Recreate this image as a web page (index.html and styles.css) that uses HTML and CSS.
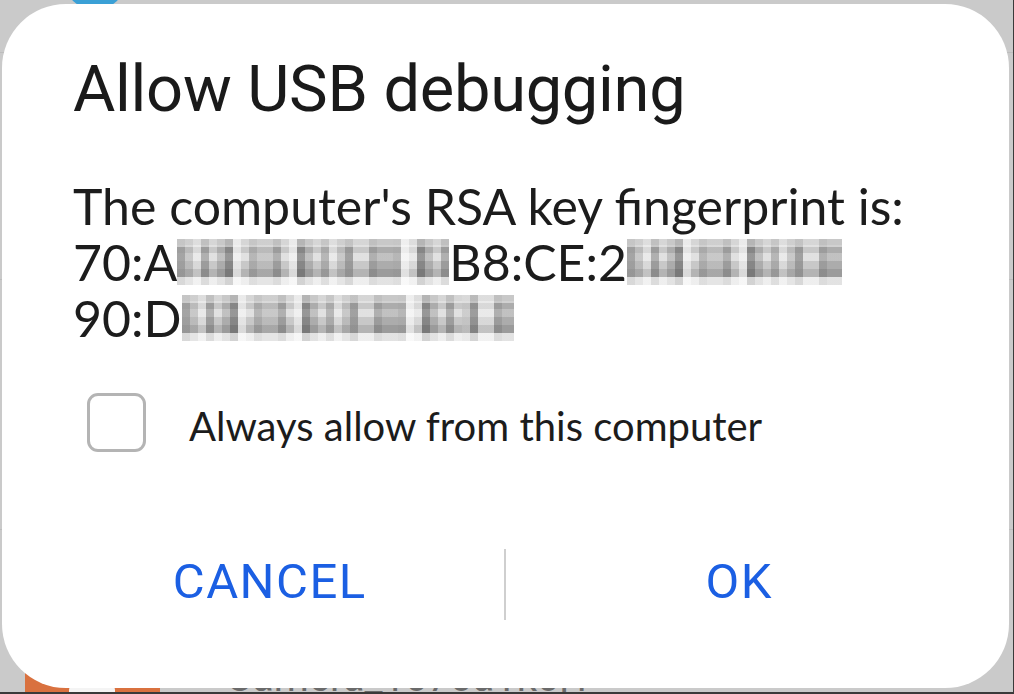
FILE: index.html
```html
<!DOCTYPE html>
<html>
<head>
<meta charset="utf-8">
<link rel="stylesheet" href="styles.css">
</head>
<body>
<div class="screen">
  <div class="bg-list">
    <div class="bg-row r1"><span class="blue-dot"></span></div>
    <div class="bg-row r2"></div>
    <div class="bg-row r3"></div>
    <div class="bg-row r4">
      <span class="app-icon"><span class="app-glyph"></span></span>
      <span class="file-name">Camera_1070a1k0j1</span>
    </div>
  </div>

  <div class="dialog">
    <h1 class="title">Allow USB debugging</h1>
    <div class="message">
      <div class="line">The computer's RSA key fingerprint is:</div>
      <div class="line">70:A<span class="mosaic m1"></span>B8:CE:2<span class="mosaic m2"></span></div>
      <div class="line">90:D<span class="mosaic m3"></span></div>
    </div>
    <label class="check-row">
      <span class="checkbox"></span>
      <span class="check-label">Always allow from this computer</span>
    </label>
    <div class="actions">
      <button class="btn">CANCEL</button>
      <span class="divider"></span>
      <button class="btn">OK</button>
    </div>
  </div>
</div>
</body>
</html>
```
FILE: styles.css
```css
* { box-sizing: border-box; }
html, body { margin: 0; padding: 0; }
body {
  width: 1014px;
  height: 694px;
  overflow: hidden;
  background: #cacaca;
  font-family: "Lato", "Noto Sans", sans-serif;
}
.screen {
  position: relative;
  width: 1014px;
  height: 694px;
  border-right: 1px solid #3a3a3a;
  border-bottom: 2px solid #3a3a3a;
  overflow: hidden;
}
.bg-list { display: flex; flex-direction: column; }
.bg-row { border-bottom: 1px solid #bdbdbd; position: relative; }
.r1 { height: 53px; }
.r2 { height: 227px; }
.r3 { height: 250px; }
.r4 { height: 170px; border-bottom: none; }
.blue-dot {
  position: absolute;
  left: 64px;
  top: -52px;
  width: 62px;
  height: 62px;
  border-radius: 50%;
  background: #3aa0d6;
}
.app-icon {
  position: absolute;
  left: 25px;
  top: 96px;
  width: 135px;
  height: 135px;
  border-radius: 34px;
  background: #d9713f;
}
.app-glyph {
  position: absolute;
  left: 44px;
  top: 58px;
  width: 46px;
  height: 30px;
  border-radius: 6px;
  background: #f4f4f4;
}
.file-name {
  position: absolute;
  left: 226px;
  top: 128px;
  font-family: "Roboto", sans-serif;
  font-size: 40px;
  line-height: 40px;
  color: #6a6a6a;
  white-space: nowrap;
}

.dialog {
  position: absolute;
  left: 2px;
  top: 4px;
  width: 1007px;
  height: 684px;
  background: #fff;
  border-radius: 64px;
  padding: 53px 0 0 71px;
  display: flex;
  flex-direction: column;
}
.title {
  margin: 0;
  font-family: "Roboto", sans-serif;
  font-weight: 400;
  font-size: 65px;
  line-height: 65px;
  color: #1a1a1a;
  letter-spacing: -0.3px;
}
.message {
  margin-top: 56px;
  font-size: 50px;
  line-height: 56px;
  color: #1c1c1c;
}
.line { white-space: nowrap; display: flex; align-items: center; height: 56px; }
.mosaic {
  display: inline-block;
  height: 46px;
  background:
    linear-gradient(0deg, rgba(255,255,255,0.6) 0 8px, transparent 8px 38px, rgba(255,255,255,0.45) 38px),
    repeating-linear-gradient(90deg, rgba(0,0,0,0.22) 0 8px, transparent 8px 24px),
    repeating-linear-gradient(90deg, rgba(0,0,0,0.14) 0 16px, transparent 16px 40px),
    repeating-linear-gradient(0deg, rgba(255,255,255,0.45) 0 8px, transparent 8px 24px),
    repeating-linear-gradient(90deg, rgba(255,255,255,0.5) 0 8px, transparent 8px 56px),
    repeating-linear-gradient(0deg, rgba(0,0,0,0.1) 0 16px, transparent 16px 40px),
    repeating-linear-gradient(90deg, rgba(255,255,255,0.3) 0 24px, transparent 24px 72px),
    #c8c8c8;
}
.m1 { width: 272px; }
.m2 { width: 215px; }
.m3 { width: 332px; }

.check-row {
  display: flex;
  align-items: center;
  margin-top: 47px;
  margin-left: 14px;
}
.checkbox {
  width: 59px;
  height: 59px;
  border: 3px solid #b4b4b4;
  border-radius: 11px;
  flex: none;
}
.check-label {
  margin-left: 43px;
  margin-top: 6px;
  font-size: 40px;
  color: #1c1c1c;
}
.actions {
  display: flex;
  align-items: center;
  margin-top: 97px;
  margin-left: -37px;
  width: 937px;
  height: 71px;
}
.btn {
  flex: 1;
  background: none;
  border: none;
  padding: 0;
  margin-bottom: 6px;
  font-family: "Roboto", sans-serif;
  font-size: 49px;
  letter-spacing: 1.5px;
  color: #1b5fe3;
  text-align: center;
}
.divider {
  width: 2px;
  height: 71px;
  background: #cfcfcf;
  flex: none;
}
```
